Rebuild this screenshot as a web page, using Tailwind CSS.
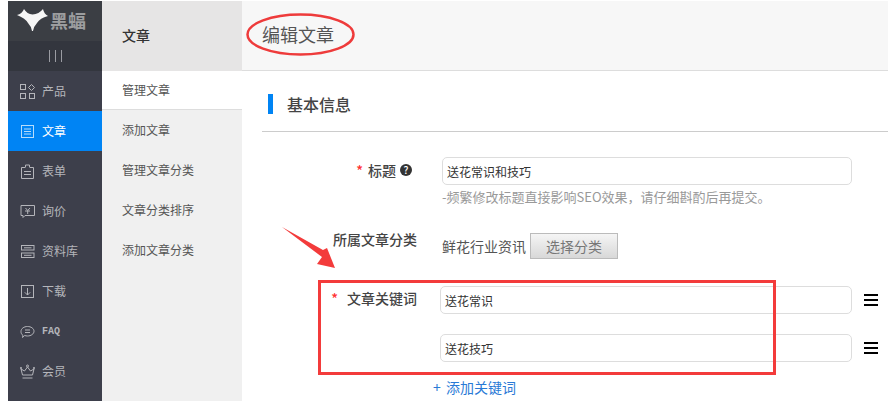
<!DOCTYPE html>
<html lang="zh-CN">
<head>
  <meta charset="UTF-8" />
  <title>编辑文章</title>
  <script src="https://cdn.jsdelivr.net/npm/@tailwindcss/browser@4"></script>
</head>

<body class="relative w-[888px] h-[401px] overflow-hidden bg-white text-[#333] text-[12px] font-['Noto_Sans_CJK_SC','Liberation_Sans',sans-serif]">

  <div class="flex h-[401px] pt-px pl-2">

    <!-- Main nav -->
    <aside class="w-[94px] shrink-0 flex flex-col bg-[#3d3f4b] text-[#b4b5ba]">
      <div class="h-10 flex items-center pl-2 pb-[2px] gap-[1px] bg-[#3b3e44]">
        <svg class="w-[33px] h-[24px]" viewBox="0 0 33 24"><path fill="#f6f6f6" d="M1 7 Q6 6 8 1 Q11 6 16.500 6.500 Q23 6 27 1 Q28 6 32 8 Q24 10 21 15 Q18 18 17 23 L16 23 Q15 18 12 15 Q9 10 1 7Z"/></svg>
        <span class="text-[18px] leading-none text-[#9c9d9f] font-bold">黑蝠</span>
      </div>
      <div class="h-[30px] flex items-center justify-center gap-[5px] bg-[#33363e]">
        <i class="w-px h-3 bg-[#9a9ca2]"></i><i class="w-px h-3 bg-[#9a9ca2]"></i><i class="w-px h-3 bg-[#9a9ca2]"></i>
      </div>

      <a class="h-10 flex items-center gap-[7px] pl-3">
        <svg class="w-[15px] h-[15px]" viewBox="0 0 15 15" fill="none" stroke="currentColor"><rect x="0.5" y="0.5" width="5" height="5"/><rect x="0.5" y="9.5" width="5" height="5"/><rect x="9.5" y="9.5" width="5" height="5"/><path d="M11.500 0.500l3 3-3 3-3-3z"/></svg>
        <span>产品</span>
      </a>
      <a class="h-10 flex items-center gap-[7px] pl-3 bg-[#0084f4] text-white">
        <svg class="w-[15px] h-[15px] text-[#b5dcfb]" viewBox="0 0 15 15" fill="none" stroke="currentColor"><rect x="1.5" y="1.5" width="12" height="12"/><path d="M4 5h7M4 7.500h7M4 10h7"/></svg>
        <span>文章</span>
      </a>
      <a class="h-10 flex items-center gap-[7px] pl-3">
        <svg class="w-[15px] h-[15px]" viewBox="0 0 15 15" fill="none" stroke="currentColor"><path d="M5 3.500H1.500v11h12v-11H10M5.500 3.500V1h4v2.500M4 7.500h7M4 10.500h7"/></svg>
        <span>表单</span>
      </a>
      <a class="h-10 flex items-center gap-[7px] pl-3">
        <svg class="w-[15px] h-[15px]" viewBox="0 0 15 15" fill="none" stroke="currentColor"><path d="M1 1.500h13.500v10H5l-2 2v-2H1zM5.500 4l2.200 2.500L10 4M5 7h5M7.700 6.500v3.500"/></svg>
        <span>询价</span>
      </a>
      <a class="h-10 flex items-center gap-[7px] pl-3">
        <svg class="w-[15px] h-[15px]" viewBox="0 0 15 15" fill="none" stroke="currentColor"><rect x="1.500" y="1.500" width="12.500" height="4.500"/><rect x="1.500" y="9" width="12.500" height="4.500"/><path d="M4 3.800h7.500M4 11.300h7.500"/></svg>
        <span>资料库</span>
      </a>
      <a class="h-10 flex items-center gap-[7px] pl-3">
        <svg class="w-[15px] h-[15px]" viewBox="0 0 15 15" fill="none" stroke="currentColor"><rect x="1.500" y="1.500" width="12" height="12"/><path d="M7.500 4v7M4.800 8.300l2.700 2.700 2.700-2.700"/></svg>
        <span>下载</span>
      </a>
      <a class="h-10 flex items-center gap-[7px] pl-3">
        <svg class="w-[15px] h-[15px]" viewBox="0 0 15 15" fill="none" stroke="currentColor"><path d="M3 11.500C1.500 10.500 1 9 1 7.500 1 4.500 4 2.500 7.500 2.500S14 4.500 14 7.200 11 12 7.500 12c-1 0-2-.2-2.800-.5L2.500 13.500z"/><path d="M5 6h5M5 8.500h5"/></svg>
        <span class="font-['Liberation_Mono',monospace] text-[10px] font-bold">FAQ</span>
      </a>
      <a class="h-10 flex items-center gap-[7px] pl-3">
        <svg class="w-[15px] h-[15px]" viewBox="0 0 15 15" fill="none" stroke="currentColor"><path d="M2.500 11L1 5l3.500 2L7.500 3l3 4L14 5l-1.500 6zM2.500 14h10"/><circle cx="7.500" cy="2" r="1"/><circle cx="1" cy="4" r=".7"/><circle cx="14" cy="4" r=".7"/></svg>
        <span>会员</span>
      </a>
    </aside>

    <!-- Sub nav -->
    <aside class="w-[140px] shrink-0 bg-[#f0f0f0] text-[#555]">
      <div class="h-[70px] flex items-center pl-5 pb-[2px] bg-[#e6e5e5] font-medium text-[14px] text-[#333]">文章</div>
      <a class="h-[39px] flex items-center pl-5 bg-white border-b border-[#ddd]">管理文章</a>
      <a class="h-10 flex items-center pl-5">添加文章</a>
      <a class="h-10 flex items-center pl-5">管理文章分类</a>
      <a class="h-10 flex items-center pl-5">文章分类排序</a>
      <a class="h-10 flex items-center pl-5">添加文章分类</a>
    </aside>

    <!-- Content -->
    <main class="flex-1 min-w-0">
      <header class="h-[70px] flex items-center pl-5 pb-[2px] bg-[#f7f7f7] border-b border-[#ddd] text-[18px] text-[#555]">编辑文章</header>

      <section class="pl-5">
        <div class="h-[61px] flex items-center pt-[6px] pl-[6px] gap-[14px] border-b border-[#ccc]">
          <i class="w-[5px] h-5 bg-[#0084f4]"></i>
          <h2 class="text-[16px] font-medium text-[#444]">基本信息</h2>
        </div>

        <div class="flex mt-[25px]">
          <div class="w-[150px] h-7 pb-[2px] flex items-center justify-end font-medium text-[14px] text-[#444]">
            <span class="mr-[5px] text-[#f33]">*</span><span class="mr-[4px]">标题</span>
            <span class="w-[12px] h-[12px] rounded-full bg-[#333] text-white text-[10px] leading-[12px] text-center">?</span>
          </div>
          <div class="ml-[30px]">
            <input value="送花常识和技巧" class="block w-[410px] h-7 pl-1 border border-[#ddd] rounded-[5px] text-[#333] outline-none" />
            <p class="mt-[3px] text-[13px] text-[#999] leading-[18px]">-频繁修改标题直接影响SEO效果，请仔细斟酌后再提交。</p>
          </div>
        </div>

        <div class="flex mt-[27px] h-[26px] items-start">
          <div class="w-[155px] text-right font-medium text-[14px] leading-[12px] text-[#444]">所属文章分类</div>
          <span class="ml-[25px] h-[26px] flex items-center text-[14px] text-[#555]">鲜花行业资讯</span>
          <button class="ml-[4px] w-[88px] h-[26px] bg-gradient-to-b from-[#f5f5f5] to-[#d8d8d8] border border-[#bbb] text-[14px] text-[#777]">选择分类</button>
        </div>

        <div class="flex mt-[27px]">
          <div class="w-[155px] h-7 pb-[3px] flex items-center justify-end gap-[9px] font-medium text-[14px] text-[#444]">
            <span class="text-[#f33]">*</span><span>文章关键词</span>
          </div>
          <div class="ml-[23px] flex flex-col gap-5">
            <div class="flex items-center gap-3">
              <input value="送花常识" class="block w-[412px] h-7 pl-1 border border-[#ddd] rounded-[5px] text-[#333] outline-none" />
              <i class="flex flex-col gap-[3px] w-[14px]"><b class="h-[2px] bg-black"></b><b class="h-[2px] bg-black"></b><b class="h-[2px] bg-black"></b></i>
            </div>
            <div class="flex items-center gap-3">
              <input value="送花技巧" class="block w-[412px] h-7 pl-1 border border-[#ddd] rounded-[5px] text-[#333] outline-none" />
              <i class="flex flex-col gap-[3px] w-[14px]"><b class="h-[2px] bg-black"></b><b class="h-[2px] bg-black"></b><b class="h-[2px] bg-black"></b></i>
            </div>
          </div>
        </div>
        <a class="flex ml-[171px] mt-[16px] text-[14px] text-[#2a7ad6] leading-[18px]"><span class="w-[13px]">+</span><span>添加关键词</span></a>
      </section>
    </main>
  </div>

  <!-- Red annotations drawn over the screenshot -->
  <svg class="absolute left-[240px] top-[10px] w-[120px] h-[50px]" viewBox="0 0 120 50" fill="none"><ellipse cx="60.500" cy="24.500" rx="53" ry="20" stroke="#ee3b3b" stroke-width="2.500"/></svg>
  <svg class="absolute left-[275px] top-[222px] w-[65px] h-[50px]" viewBox="0 0 65 50"><path fill="#f33b3b" d="M7 5 L48 28 L52 26 L60 46 L42 42 L47 35Z"/></svg>
  <div class="absolute left-[318px] top-[280px] w-[458px] h-[95px] border-[3px] border-[#f33b3b]"></div>
</body>
</html>
